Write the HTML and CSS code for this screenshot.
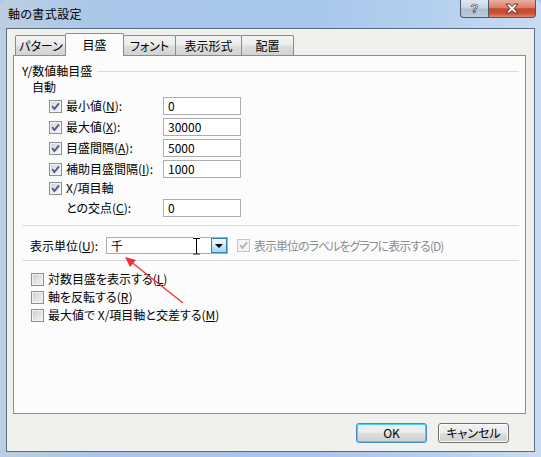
FILE: index.html
```html
<!DOCTYPE html>
<html lang="ja">
<head>
<meta charset="utf-8">
<title>軸の書式設定</title>
<link rel="stylesheet" href="styles.css">
</head>
<body>
<div class="window">
  <div class="titlebar">
    <span class="title">軸の書式設定</span>
    <div class="caption">
      <div class="cap help"><span class="q">?</span></div>
      <div class="cap close">
        <svg width="16" height="11" viewBox="0 0 16 11"><path d="M2 1 H5.5 L8 3.6 L10.5 1 H14 L10 5.5 L14 10 H10.5 L8 7.4 L5.5 10 H2 L6 5.5 Z" fill="#fff" stroke="#5a2a22" stroke-width="1"/></svg>
      </div>
    </div>
  </div>
  <div class="client">
    <div class="tabs">
      <div class="tab t1">パターン</div>
      <div class="tab active t2">目盛</div>
      <div class="tab t3">フォント</div>
      <div class="tab t4">表示形式</div>
      <div class="tab t5">配置</div>
    </div>
    <div class="panel">
      <div class="ghead"><span>Y/数値軸目盛</span><span class="rule"></span></div>
      <div class="auto">自動</div>
      <div class="fields">
        <div class="frow"><span class="cb"><svg width="11" height="11" viewBox="0 0 11 11"><path d="M2.2 5.2 L4.4 8 L9 2.4" fill="none" stroke="#4a5e8e" stroke-width="1.9"/></svg></span><span class="flabel">最小値(<u>N</u>):</span><span class="input">0</span></div>
        <div class="frow"><span class="cb"><svg width="11" height="11" viewBox="0 0 11 11"><path d="M2.2 5.2 L4.4 8 L9 2.4" fill="none" stroke="#4a5e8e" stroke-width="1.9"/></svg></span><span class="flabel">最大値(<u>X</u>):</span><span class="input">30000</span></div>
        <div class="frow"><span class="cb"><svg width="11" height="11" viewBox="0 0 11 11"><path d="M2.2 5.2 L4.4 8 L9 2.4" fill="none" stroke="#4a5e8e" stroke-width="1.9"/></svg></span><span class="flabel">目盛間隔(<u>A</u>):</span><span class="input">5000</span></div>
        <div class="frow"><span class="cb"><svg width="11" height="11" viewBox="0 0 11 11"><path d="M2.2 5.2 L4.4 8 L9 2.4" fill="none" stroke="#4a5e8e" stroke-width="1.9"/></svg></span><span class="flabel">補助目盛間隔(<u>I</u>):</span><span class="input">1000</span></div>
        <div class="frow xrow"><span class="cb"><svg width="11" height="11" viewBox="0 0 11 11"><path d="M2.2 5.2 L4.4 8 L9 2.4" fill="none" stroke="#4a5e8e" stroke-width="1.9"/></svg></span><span class="flabel">X/項目軸</span></div>
        <div class="frow crow"><span class="flabel">との交点(<u>C</u>):</span><span class="input">0</span></div>
      </div>
      <div class="sep"></div>
      <div class="unit">
        <span class="unit-label">表示単位(<u>U</u>):</span>
        <div class="combo"><span class="combo-text">千</span><span class="dd"><span class="tri"></span></span></div>
        <span class="cb disabled"><svg width="11" height="11" viewBox="0 0 11 11"><path d="M2.2 5.2 L4.4 8 L9 2.4" fill="none" stroke="#b4b4b4" stroke-width="1.9"/></svg></span>
        <span class="dlabel">表示単位のラベルをグラフに表示する(D)</span>
      </div>
      <div class="sep sep2"></div>
      <div class="opts">
        <div class="orow"><span class="cb off"></span><span class="olabel">対数目盛を表示する(<u>L</u>)</span></div>
        <div class="orow"><span class="cb off"></span><span class="olabel">軸を反転する(<u>R</u>)</span></div>
        <div class="orow"><span class="cb off"></span><span class="olabel">最大値で X/項目軸と交差する(<u>M</u>)</span></div>
      </div>
    </div>
    <div class="footer">
      <button class="btn default">OK</button>
      <button class="btn">キャンセル</button>
    </div>
  </div>
  <svg class="overlay" width="541" height="457" viewBox="0 0 541 457">
    <line x1="183" y1="303" x2="130" y2="261" stroke="#f23232" stroke-width="1.3"/>
    <path d="M125 257 L136 260 L130 267 Z" fill="#f23232"/>
    <path d="M193 238.5 H200 M196.5 238.5 V254 M193 254 H200" stroke="#fff" stroke-width="3" fill="none"/>
    <path d="M193 238.5 H200 M196.5 238.5 V254 M193 254 H200" stroke="#000" stroke-width="1" fill="none"/>
  </svg>
</div>
</body>
</html>
```

FILE: styles.css
```css
html, body {
  margin: 0;
  padding: 0;
}
body {
  width: 541px;
  height: 457px;
  overflow: hidden;
  font-family: "Noto Sans CJK JP", "Noto Sans", sans-serif;
  font-size: 12px;
  font-feature-settings: "palt";
  color: #000;
  background: #a9c9ee;
}
u { text-decoration: underline; text-underline-offset: 1px; }

.window {
  position: relative;
  width: 541px;
  height: 457px;
  display: flex;
  flex-direction: column;
  background: linear-gradient(90deg, #bccfdf 0%, #a9c7e9 18%, #a6c6ec 55%, #b4d0ef 80%, #c8dcf2 100%);
  border-radius: 6px 6px 0 0;
}

.titlebar {
  height: 28px;
  display: flex;
  align-items: flex-start;
  flex: none;
}
.title {
  margin: 6px 0 0 8px;
  line-height: 16px;
  font-size: 12px;
  letter-spacing: 0.4px;
}
.caption {
  margin-left: auto;
  margin-right: 5px;
  display: flex;
}
.cap {
  height: 18px;
  box-sizing: border-box;
  border: 1px solid #4a5a70;
  border-top: none;
  display: flex;
  align-items: center;
  justify-content: center;
}
.help {
  width: 28px;
  border-right: none;
  border-radius: 0 0 0 4px;
  background: linear-gradient(#dfe7f0, #c6d3e2 48%, #aebfd3 52%, #bccbdd);
}
.q {
  font-family: "Liberation Sans", sans-serif;
  font-weight: bold;
  font-size: 13px;
  line-height: 14px;
  color: #fff;
  -webkit-text-stroke: 0.7px #3d4b5e;
}
.close {
  width: 48px;
  border-radius: 0 0 4px 0;
  background: linear-gradient(#eab0a0, #d9806c 45%, #c7452d 52%, #cf5236 80%, #e08a6f);
}

.client {
  flex: 1;
  margin: 0 6px 5px 6px;
  border: 1px solid #5b6b80;
  background: #f0f0ed;
  display: flex;
  flex-direction: column;
}

.tabs {
  position: relative;
  z-index: 1;
  display: flex;
  align-items: flex-end;
  height: 22px;
  margin-top: 4px;
  padding-left: 8px;
  flex: none;
}
.tab {
  height: 20px;
  box-sizing: border-box;
  border: 1px solid #898c95;
  border-bottom: none;
  border-radius: 2px 2px 0 0;
  background: linear-gradient(#f4f4f4, #ececec 48%, #dedede 52%, #d2d2d2);
  display: flex;
  align-items: center;
  justify-content: center;
  line-height: 14px;
}
.tab.active {
  height: 23px;
  margin-bottom: -1px;
  background: #fcfcfc;
}
.t1 { width: 52px; }
.t2 { width: 59px; margin-left: -2px; }
.t3 { width: 53px; margin-left: -1px; }
.t4 { width: 67px; margin-left: -1px; }
.t5 { width: 53px; margin-left: -1px; }

.panel {
  margin: 0 8px 0 6px;
  height: 359px;
  box-sizing: border-box;
  border: 1px solid #898c95;
  background: #fcfcfc;
  display: flex;
  flex-direction: column;
  flex: none;
}

.ghead {
  display: flex;
  align-items: center;
  height: 16px;
  line-height: 16px;
  margin-top: 7px;
  padding: 0 6px 0 8px;
}
.rule {
  flex: 1;
  height: 1px;
  margin-left: 5px;
  background: #d2dde6;
}
.auto {
  height: 16px;
  line-height: 16px;
  padding-left: 18px;
}

.fields {
  margin-top: 2px;
  padding-left: 35px;
  display: flex;
  flex-direction: column;
}
.frow {
  display: flex;
  align-items: center;
  height: 18px;
  margin-top: 3px;
  line-height: 16px;
}
.frow:first-child { margin-top: 0; }
.frow.xrow { margin-top: 1px; }
.frow.crow { margin-top: 2px; padding-left: 17px; }
.flabel {
  width: 97px;
  margin-left: 4px;
  white-space: nowrap;
}
.crow .flabel { margin-left: 0; }

.cb {
  width: 13px;
  height: 13px;
  box-sizing: border-box;
  flex: none;
  border: 1px solid #8e8f8f;
  background: linear-gradient(135deg, #d4d4d4, #eeeeee 70%, #f8f8f8);
  box-shadow: inset 0 0 0 1px #f3f3f3;
  display: flex;
  align-items: center;
  justify-content: center;
}
.cb.off {
  background: linear-gradient(135deg, #cbcbcb, #e6e6e6 60%, #f4f4f4);
}
.cb.disabled {
  border-color: #c4c4c4;
  background: #f4f4f4;
  box-shadow: none;
  margin-left: 9px;
}

.input {
  width: 78px;
  height: 18px;
  box-sizing: border-box;
  border: 1px solid #abadb3;
  background: #fff;
  padding-left: 4px;
  line-height: 16px;
}

.sep {
  height: 1px;
  background: #d2dde6;
  margin: 8px 6px 0 8px;
  flex: none;
}
.sep2 { margin-top: 6px; }

.unit {
  display: flex;
  align-items: center;
  height: 17px;
  margin-top: 11px;
  padding-left: 16px;
  line-height: 16px;
}
.unit-label { width: 76px; white-space: nowrap; }
.combo {
  width: 122px;
  height: 17px;
  box-sizing: border-box;
  border: 1px solid #abadb3;
  background: #fff;
  display: flex;
  align-items: center;
  padding-left: 4px;
  flex: none;
}
.combo-text { flex: 1; line-height: 15px; }
.dd {
  width: 16px;
  height: 15px;
  box-sizing: border-box;
  border: 1px solid #3c7fb1;
  background: linear-gradient(#eaf6fd, #d9f0fc 48%, #bee6fd 52%, #a7d9f5);
  display: flex;
  align-items: center;
  justify-content: center;
}
.tri {
  width: 0;
  height: 0;
  border-left: 4px solid transparent;
  border-right: 4px solid transparent;
  border-top: 4px solid #000;
  margin-top: 1px;
}
.dlabel {
  margin-left: 4px;
  color: #8d8d8d;
  white-space: nowrap;
  letter-spacing: -1px;
}

.opts {
  margin-top: 9px;
  padding-left: 17px;
  display: flex;
  flex-direction: column;
}
.orow {
  display: flex;
  align-items: center;
  height: 18px;
  line-height: 16px;
}
.olabel { margin-left: 4px; white-space: nowrap; }

.footer {
  display: flex;
  justify-content: flex-end;
  gap: 11px;
  padding: 9px 25px 0 0;
}
.btn {
  width: 71px;
  height: 20px;
  box-sizing: border-box;
  padding: 0;
  border: 1px solid #707070;
  border-radius: 3px;
  background: linear-gradient(#f2f2f2, #ebebeb 48%, #dddddd 52%, #cfcfcf);
  box-shadow: inset 0 0 0 1px #fcfcfc;
  font: inherit;
  font-feature-settings: "palt";
  color: #000;
  line-height: 16px;
  display: flex;
  align-items: center;
  justify-content: center;
}
.btn.default {
  border-color: #3c8fc6;
  box-shadow: inset 0 0 0 1px #48d0f5;
}

.overlay {
  position: absolute;
  left: 0;
  top: 0;
  pointer-events: none;
}
```
